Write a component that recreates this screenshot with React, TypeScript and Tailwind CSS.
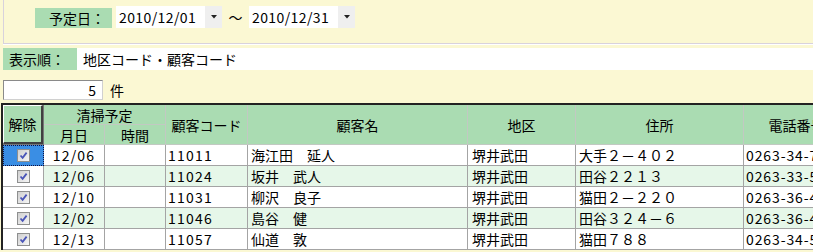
import React from "react";

const rows = [
  { date: "12/06", code: "11011", name: "海江田　延人", area: "堺井武田", addr: "大手２－４０２", tel: "0263-34-7215" },
  { date: "12/06", code: "11024", name: "坂井　武人", area: "堺井武田", addr: "田谷２２１３", tel: "0263-33-5108" },
  { date: "12/10", code: "11031", name: "柳沢　良子", area: "堺井武田", addr: "猫田２－２２０", tel: "0263-36-4422" },
  { date: "12/02", code: "11046", name: "島谷　健", area: "堺井武田", addr: "田谷３２４－６", tel: "0263-36-4871" },
  { date: "12/13", code: "11057", name: "仙道　敦", area: "堺井武田", addr: "猫田７８８", tel: "0263-34-5530" },
];

function Arrow() {
  return (
    <div className="w-[17px] h-[22px] bg-[#efefef] flex items-center justify-center">
      <svg width="6" height="4" viewBox="0 0 6 4">
        <path d="M0 0 L6 0 L3 3.5 Z" fill="#222" />
      </svg>
    </div>
  );
}

function Check() {
  return (
    <div className="w-[13px] h-[13px] border border-[#8e8f8f] bg-gradient-to-br from-[#d0d0d0] to-[#f6f6f6] flex items-center justify-center">
      <svg width="9" height="9" viewBox="0 0 9 9">
        <path d="M1.5 4.5 L3.6 6.8 L7.6 1.6" fill="none" stroke="#4a55b8" strokeWidth="1.8" />
      </svg>
    </div>
  );
}

export default function App() {
  const hdr = "bg-[#aadcb2] border-r border-b border-[#c2c9c2] flex items-center justify-center";
  const cell = "border-r border-b border-[#a4a4a4] flex items-center overflow-hidden whitespace-nowrap";
  return (
    <div
      className="w-[813px] h-[252px] overflow-hidden bg-[#fbf8d3] text-[14px] leading-none text-black"
      style={{ fontFamily: '"Noto Sans CJK JP", "Noto Sans", sans-serif' }}
    >
      {/* top panel */}
      <div className="ml-[3px] h-[44px] border-l border-b border-[#d8d2dc] shadow-[0_1px_0_#ffffff] flex items-start pl-[31px] pt-[6px]">
        <div className="mt-[2px] w-[77px] h-[20px] bg-[#aadcb2] flex items-center pl-[14px]">予定日：</div>
        <div className="ml-[4px] flex">
          <div className="w-[89px] h-[22px] bg-white flex items-center pl-[3px] tracking-[0.4px]">2010/12/01</div>
          <Arrow />
        </div>
        <div className="w-[27px] h-[22px] flex items-center justify-center">～</div>
        <div className="flex">
          <div className="w-[89px] h-[22px] bg-white flex items-center pl-[3px] tracking-[0.4px]">2010/12/31</div>
          <Arrow />
        </div>
      </div>

      {/* order row */}
      <div className="mt-[4px] ml-[3px] flex h-[22px]">
        <div className="w-[74px] bg-[#aadcb2] flex items-center pl-[6px]">表示順：</div>
        <div className="flex-1 bg-white flex items-center pl-[6px]">地区コード・顧客コード</div>
      </div>

      {/* count row */}
      <div className="mt-[10px] ml-[3px] flex items-center h-[20px]">
        <div className="w-[100px] h-[20px] bg-white border border-[#8a8a8a] border-b-[#d0d0d0] border-r-[#d0d0d0] flex items-center justify-end pr-[6px]">5</div>
        <div className="ml-[7px]">件</div>
      </div>

      {/* table */}
      <div className="mt-[3px] ml-[1px] w-[900px] border-t-2 border-l-2 border-[#222]">
        <div className="grid grid-cols-[41px_61px_61px_82px_220px_108px_168px_106px] grid-rows-[20px_20px_21px_21px_21px_21px_21px]">
          <div className="row-span-2 bg-[#aadcb2] border-r border-b border-[#777] p-0">
            <div className="h-full w-full border-t border-l border-white border-r-2 border-b-2 border-r-[#404040] border-b-[#404040] flex items-center justify-center">
              解除
            </div>
          </div>
          <div className={`col-span-2 ${hdr}`}>清掃予定</div>
          <div className={`row-span-2 ${hdr}`}>顧客コード</div>
          <div className={`row-span-2 ${hdr}`}>顧客名</div>
          <div className={`row-span-2 ${hdr}`}>地区</div>
          <div className={`row-span-2 ${hdr}`}>住所</div>
          <div className={`row-span-2 ${hdr} whitespace-nowrap`}>電話番号</div>
          <div className={hdr}>月日</div>
          <div className={hdr}>時間</div>

          {rows.map((r, i) => {
            const bg = i % 2 === 1 ? "bg-[#e6f7e9]" : "bg-white";
            return (
              <React.Fragment key={i}>
                <div
                  className={
                    i === 0
                      ? "bg-[#3a8ee4] border border-dotted border-[#101040] flex items-center justify-center"
                      : "bg-white border-r border-b border-[#a4a4a4] flex items-center justify-center"
                  }
                >
                  <Check />
                </div>
                <div className={`${cell} ${bg} justify-center tracking-[1.2px]`}>{r.date}</div>
                <div className={`${cell} ${bg}`}></div>
                <div className={`${cell} ${bg} pl-[2px] tracking-[1.2px]`}>{r.code}</div>
                <div className={`${cell} ${bg} pl-[3px]`}>{r.name}</div>
                <div className={`${cell} ${bg} pl-[4px]`}>{r.area}</div>
                <div className={`${cell} ${bg} pl-[3px]`}>{r.addr}</div>
                <div className={`${cell} ${bg} pl-[2px] tracking-[0.9px]`}>{r.tel}</div>
              </React.Fragment>
            );
          })}
        </div>
      </div>
    </div>
  );
}
